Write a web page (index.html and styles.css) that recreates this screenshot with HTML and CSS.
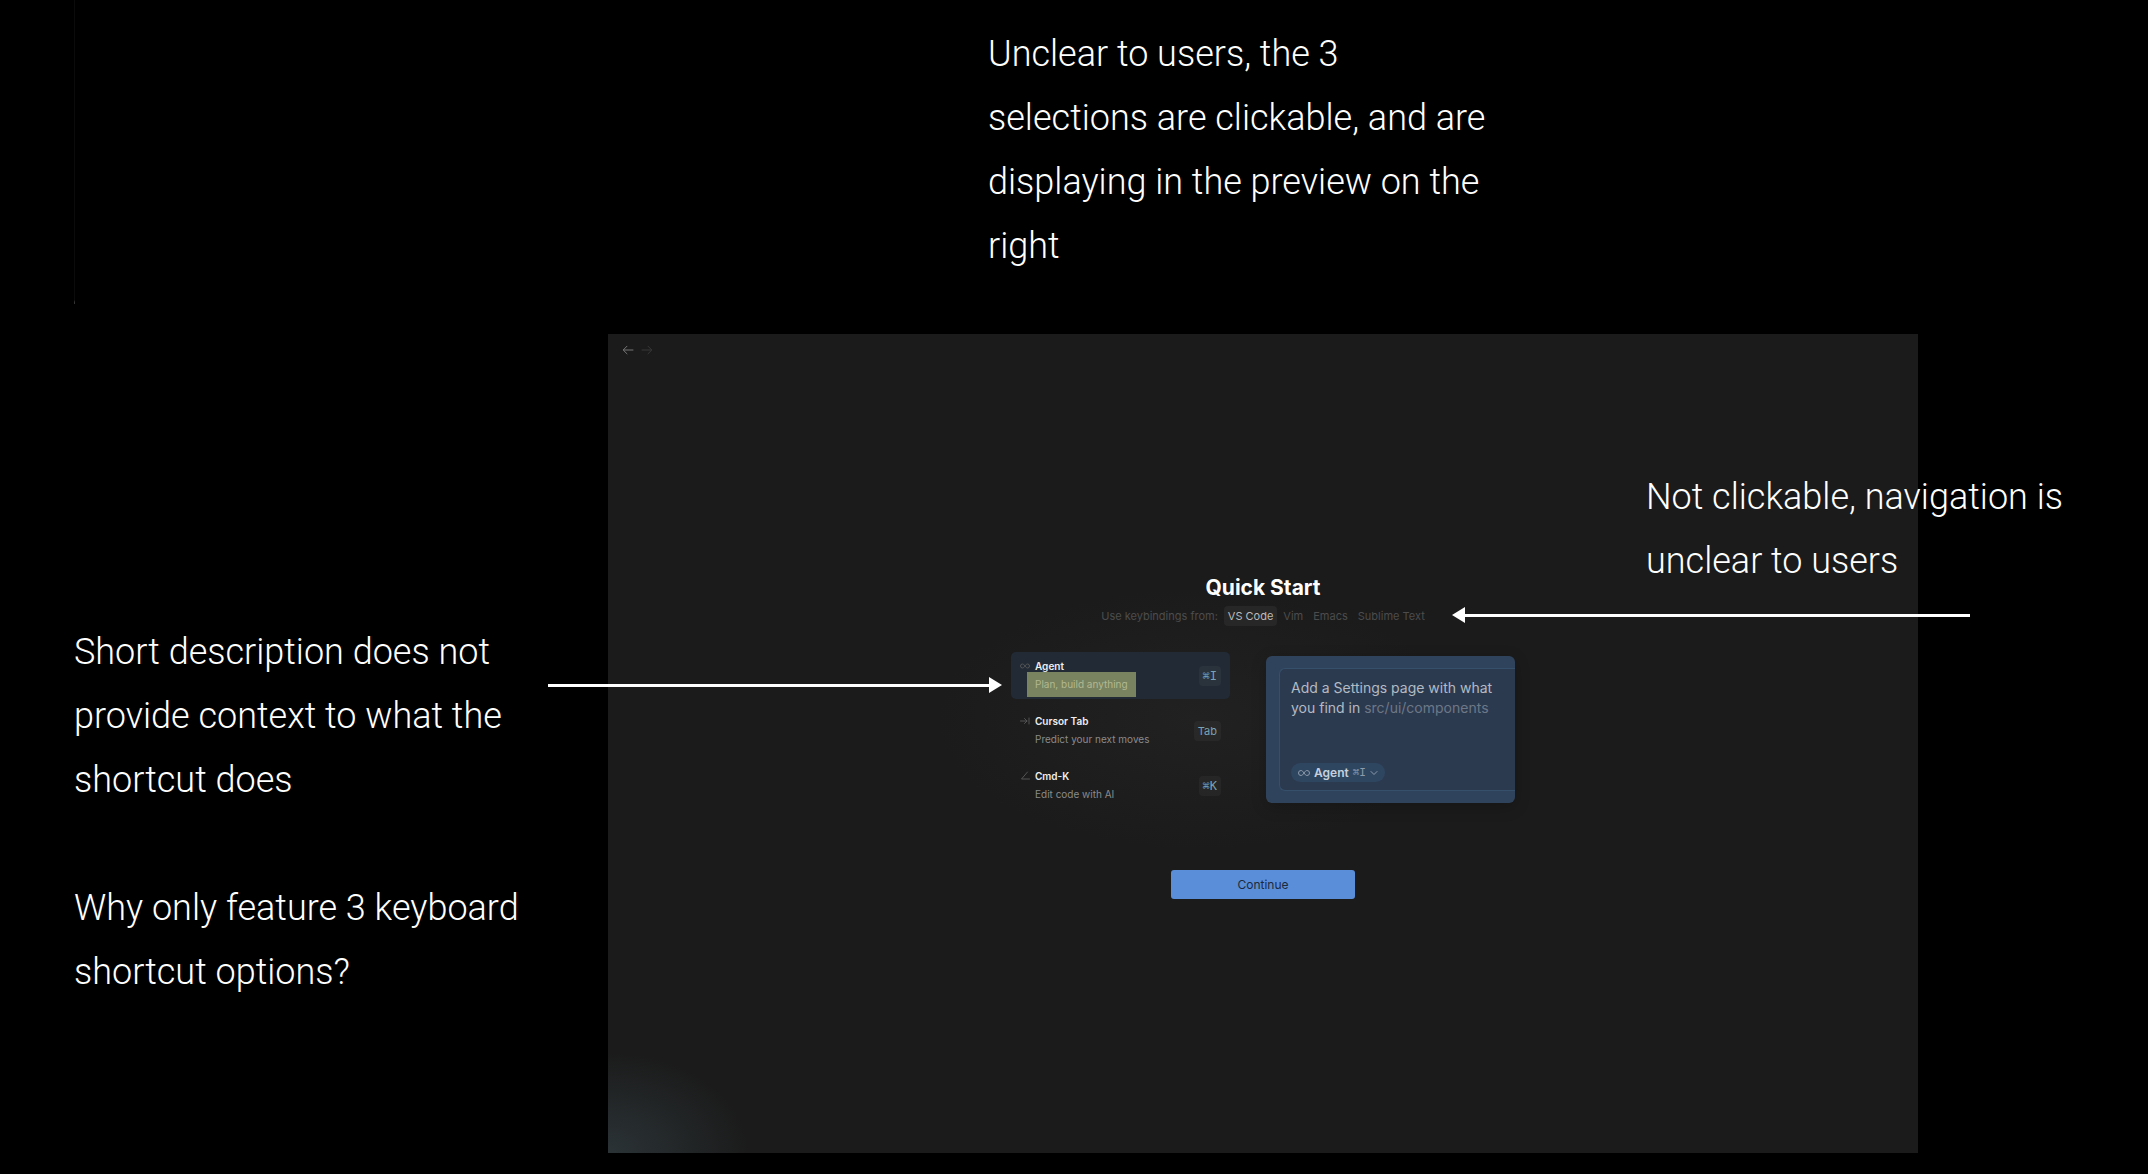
FILE: index.html
```html
<!DOCTYPE html>
<html lang="en">
<head>
    <meta charset="UTF-8">
    <meta name="viewport" content="width=device-width, initial-scale=1.0">
    <title>Quick Start review</title>
    <link rel="stylesheet" href="styles.css">
</head>
<body>
    <main class="board">
        <div class="note note-top">
            <p>Unclear to users, the 3<br>selections are clickable, and are<br>displaying in the preview on the<br>right</p>
        </div>

        <div class="note note-left">
            <p>Short description does not<br>provide context to what the<br>shortcut does</p>
            <p>Why only feature 3 keyboard<br>shortcut options?</p>
        </div>

        <section class="window">
            <nav class="history">
                <button type="button" aria-label="Back">
                    <svg width="12" height="10" viewBox="0 0 12 10"><path d="M11 5H1.5M5 1.2L1.2 5L5 8.8"/></svg>
                </button>
                <button type="button" aria-label="Forward" disabled>
                    <svg width="12" height="10" viewBox="0 0 12 10"><path d="M1 5h9.500M7 1.200L10.800 5L7 8.800"/></svg>
                </button>
            </nav>

            <h1>Quick Start</h1>

            <div class="keybindings">
                <span>Use keybindings from:</span>
                <button type="button" class="selected">VS Code</button>
                <button type="button">Vim</button>
                <button type="button">Emacs</button>
                <button type="button">Sublime Text</button>
            </div>

            <div class="content">
                <div class="features">
                    <button type="button" class="feature active">
                        <svg class="icon" width="10" height="10" viewBox="0 0 10 10"><path d="M5 5C4 3.600 3.400 3 2.500 3a2 2 0 0 0 0 4C3.400 7 4 6.400 5 5s1.600-2 2.500-2a2 2 0 0 1 0 4C6.600 7 6 6.400 5 5z"/></svg>
                        <span class="info">
                            <b>Agent</b>
                            <span class="desc marked">Plan, build anything</span>
                        </span>
                        <kbd class="mono">⌘I</kbd>
                    </button>
                    <button type="button" class="feature">
                        <svg class="icon" width="10" height="10" viewBox="0 0 10 10"><path d="M0.500 5H7M4.500 2.500L7 5L4.500 7.500M9 2v6"/></svg>
                        <span class="info">
                            <b>Cursor Tab</b>
                            <span class="desc">Predict your next moves</span>
                        </span>
                        <kbd>Tab</kbd>
                    </button>
                    <button type="button" class="feature">
                        <svg class="icon" width="10" height="10" viewBox="0 0 10 10"><path d="M7.500 1L1.500 8H9.500"/></svg>
                        <span class="info">
                            <b>Cmd-K</b>
                            <span class="desc">Edit code with AI</span>
                        </span>
                        <kbd class="mono">⌘K</kbd>
                    </button>
                </div>

                <div class="preview">
                    <div class="prompt">
                        <p>Add a Settings page with what<br>you find in <span>src/ui/components</span></p>
                        <button type="button" class="mode">
                            <svg width="12" height="8" viewBox="0 0 12 8"><path d="M6 4C5 2.500 4.200 1.500 3 1.500a2.500 2.500 0 0 0 0 5C4.200 6.500 5 5.500 6 4s1.800-2.500 3-2.500a2.500 2.500 0 0 1 0 5C7.800 6.500 7 5.500 6 4z"/></svg>
                            Agent
                            <small class="mono">⌘I</small>
                            <svg width="8" height="8" viewBox="0 0 8 8"><path d="M1 2.500L4 5.500L7 2.500"/></svg>
                        </button>
                    </div>
                </div>
            </div>

            <button type="button" class="continue">Continue</button>

            <div class="note note-right">
                <p>Not clickable, navigation is<br>unclear to users</p>
            </div>
            <div class="arrow arrow-left"></div>
            <div class="arrow arrow-right"></div>
        </section>
    </main>
</body>
</html>
```
FILE: styles.css
```css
* {
    box-sizing: border-box;
}

body {
    margin: 0;
    min-height: 100vh;
    background: #000;
    color: #fff;
    font-family: Inter, "Liberation Sans", sans-serif;
}

h1, p {
    margin: 0;
}

button {
    margin: 0;
    padding: 0;
    border: none;
    background: none;
    color: inherit;
    font-family: inherit;
    cursor: pointer;
}

svg {
    display: block;
    fill: none;
    stroke: currentColor;
    stroke-linecap: round;
    stroke-linejoin: round;
}

.board {
    position: relative;
    display: grid;
    grid-template-columns: 608px 1fr 230px;
    grid-template-rows: 334px auto;
    padding-bottom: 20px;
}

/* Faint guide line in the top left */
.board::before {
    content: "";
    position: absolute;
    top: 0;
    left: 74px;
    width: 1px;
    height: 304px;
    background: linear-gradient(#0b0b0b 300px, #333 302px);
}

/* Notes around the window */
.note {
    font-family: Roboto, Inter, sans-serif;
    font-size: 36px;
    font-weight: 300;
    line-height: 64px;
    white-space: nowrap;
}

.note-top {
    grid-column: 2;
    padding: 22px 0 0 380px;
}

.note-left {
    grid-column: 1;
    grid-row: 2;
    padding: 286px 0 0 74px;
}

.note-left p + p {
    margin-top: 64px;
}

.note-right {
    position: absolute;
    top: 131px;
    left: 1038px;
}

/* App window */
.window {
    grid-column: 2;
    grid-row: 2;
    position: relative;
    aspect-ratio: 16 / 10;
    display: flex;
    flex-direction: column;
    align-items: center;
    background:
        radial-gradient(ellipse 140px 100px at 0 100%, #2b3336, transparent),
        radial-gradient(ellipse 260px 130px at 45% 47%, #212121, transparent),
        #1b1b1b;
}

.history {
    align-self: flex-start;
    display: flex;
    gap: 7px;
    padding: 11px 14px;
    color: #777;
}

.history button:disabled {
    color: #383838;
}

h1 {
    margin-top: 209px;
    font-size: 21px;
    font-weight: 700;
    line-height: 26px;
}

.keybindings {
    display: flex;
    align-items: center;
    gap: 2px;
    margin-top: 5px;
    padding-left: 4px;
    color: #4c4c4c;
    font-size: 11px;
    line-height: 20px;
}

.keybindings button {
    padding: 0 4px;
    border-radius: 4px;
    font-size: 11px;
    line-height: 20px;
}

.keybindings .selected {
    margin-left: 4px;
    background: #272727;
    color: #bbb;
}

.content {
    display: flex;
    gap: 36px;
    margin-top: 26px;
}

.features {
    display: flex;
    flex-direction: column;
    gap: 8px;
    width: 219px;
}

.feature {
    display: flex;
    align-items: center;
    height: 47px;
    padding: 0 9px;
    border-radius: 5px;
    text-align: left;
}

.feature.active {
    background: #222a35;
}

.icon {
    align-self: flex-start;
    margin-top: 9px;
    color: #555;
}

.info {
    display: flex;
    flex-direction: column;
    align-items: flex-start;
    flex: 1;
    gap: 1px;
    padding-left: 5px;
    font-size: 10px;
    line-height: 17px;
}

.info b {
    color: #eee;
    font-weight: 600;
}

.desc {
    color: #8b8b8b;
}

.marked {
    margin: -4px -8px;
    padding: 4px 8px;
    background: #79835f;
    color: #b2b891;
}

kbd {
    padding: 0 4px;
    border-radius: 4px;
    background: rgba(255, 255, 255, 0.04);
    color: #78a3b3;
    font-family: inherit;
    font-size: 11px;
    line-height: 20px;
}

.mono {
    font-family: "DejaVu Sans Mono", monospace;
}

kbd.mono {
    font-size: 12px;
}

.preview {
    width: 249px;
    height: 147px;
    margin-top: 4px;
    padding: 12px 0 12px 13px;
    border-radius: 6px;
    background: #30435c;
    box-shadow: 0 4px 16px rgba(0, 0, 0, 0.2);
}

.prompt {
    display: flex;
    flex-direction: column;
    align-items: flex-start;
    justify-content: space-between;
    height: 100%;
    padding: 9px 0 8px 11px;
    border: 1px solid #36506b;
    border-right: none;
    border-radius: 6px 0 0 6px;
    background: #2c3a50;
    color: #b3bac3;
    font-size: 14px;
    line-height: 20px;
    white-space: nowrap;
}

.prompt span {
    color: #6d7887;
}

.mode {
    display: flex;
    align-items: center;
    gap: 4px;
    height: 19px;
    padding: 0 7px;
    border-radius: 10px;
    background: #2f4661;
    color: #c6d0dc;
    font-size: 12px;
    font-weight: 600;
}

.mode svg,
.mode small {
    color: #8d9aaa;
}

.mode small {
    font-size: 11px;
    font-weight: 400;
}

.continue {
    width: 184px;
    height: 29px;
    margin-top: 61px;
    border-radius: 3px;
    background: #5a8ed8;
    color: #1b2a40;
    font-size: 12px;
    font-weight: 400;
}

/* Arrows that point into the window */
.arrow {
    position: absolute;
    height: 3px;
    background: #fff;
}

.arrow::after {
    content: "";
    position: absolute;
    top: -7px;
    border: 8px solid transparent;
}

.arrow-left {
    top: 350px;
    left: -60px;
    width: 442px;
}

.arrow-left::after {
    right: -12px;
    border-right: none;
    border-left: 13px solid #fff;
}

.arrow-right {
    top: 280px;
    right: -52px;
    width: 506px;
}

.arrow-right::after {
    left: -12px;
    border-left: none;
    border-right: 13px solid #fff;
}
```
